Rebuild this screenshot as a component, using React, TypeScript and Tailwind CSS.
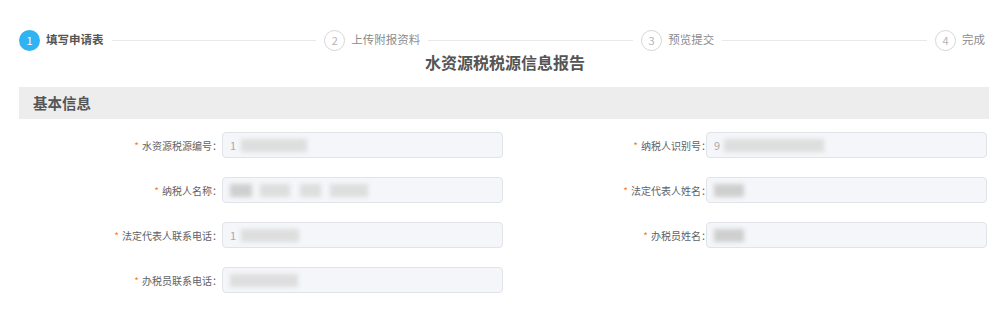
import React from 'react';

const font = { fontFamily: '"Noto Sans CJK SC", "Noto Sans", sans-serif' };

const steps = ['填写申请表', '上传附报资料', '预览提交', '完成'];

interface Blob {
    w: number;
    gap?: number;
    dark?: boolean;
}

interface Field {
    label: string;
    lead?: string;
    blobs: Blob[];
}

const leftFields: Field[] = [
    { label: '水资源税源编号：', lead: '1', blobs: [{ w: 66, gap: 3 }] },
    { label: '纳税人名称：', blobs: [{ w: 22, dark: true }, { w: 30, gap: 8 }, { w: 21, gap: 10 }, { w: 38, gap: 9 }] },
    { label: '法定代表人联系电话：', lead: '1', blobs: [{ w: 58, gap: 3 }] },
    { label: '办税员联系电话：', blobs: [{ w: 68 }] },
];

const rightFields: Field[] = [
    { label: '纳税人识别号：', lead: '9', blobs: [{ w: 100, gap: 2 }] },
    { label: '法定代表人姓名：', blobs: [{ w: 30, dark: true }] },
    { label: '办税员姓名：', blobs: [{ w: 30, dark: true }] },
];

const Redacted: React.FC<{ field: Field }> = ({ field }) => (
    <div className="flex items-center h-full pl-[7px] text-[11px] text-[#aaa]">
        {field.lead && <span className="mr-[2px]">{field.lead}</span>}
        {field.blobs.map((b, i) => (
            <span
                key={i}
                className={`h-[13px] blur-[2px] ${b.dark ? 'bg-[#cfcfcf]' : 'bg-[#dedede]'}`}
                style={{ width: b.w, marginLeft: b.gap ?? 0 }}
            />
        ))}
    </div>
);

const Input: React.FC<{ field: Field }> = ({ field }) => (
    <div className="relative h-[26px] w-[281px] rounded-[4px] border border-[#e0e3e8] bg-[#f4f6f9]">
        <Redacted field={field} />
    </div>
);

const Label: React.FC<{ text: string; className?: string }> = ({ text, className }) => (
    <div className={`text-right text-[10px] text-[#606266] whitespace-nowrap ${className ?? ''}`}>
        <span className="text-[#ff7a1a] mr-[3px]">*</span>
        {text}
    </div>
);

export default function App() {
    return (
        <div className="bg-white w-[1000px] h-[318px] overflow-hidden" style={font}>
            <div className="ml-[19px] w-[970px]">
                {/* Steps: lines share the free space equally */}
                <div className="flex items-center pt-[30px] h-[50px] pr-[4px]">
                    {steps.map((s, i) => {
                        const active = i === 0;
                        const last = i === steps.length - 1;
                        return (
                            <React.Fragment key={s}>
                                <div
                                    className={`flex items-center justify-center w-[21px] h-[21px] rounded-full text-[11px] shrink-0 ${
                                        active ? 'bg-[#2fb3f2] text-white' : 'border border-[#d6d6d6] text-[#b5b5b5]'
                                    }`}
                                >
                                    {i + 1}
                                </div>
                                <span
                                    className={`ml-[6px] text-[11.5px] whitespace-nowrap ${
                                        active ? 'font-bold text-[#555]' : 'text-[#8c8c8c]'
                                    }`}
                                >
                                    {s}
                                </span>
                                {!last && <div className="flex-1 h-px bg-[#e8e8e8] ml-[8px] mr-[8px]" />}
                            </React.Fragment>
                        );
                    })}
                </div>

                {/* Title */}
                <h1 className="text-center text-[16px] leading-[20px] font-bold text-[#555] mt-[2px] pl-[2px]">
                    水资源税税源信息报告
                </h1>

                {/* Section header */}
                <div className="mt-[15px] h-[32px] bg-[#ededed] flex items-center pl-[14px]">
                    <span className="text-[14.5px] font-bold text-[#555]">基本信息</span>
                </div>

                {/* Form */}
                <div className="grid grid-cols-2 mt-[13px] gap-y-[19px]">
                    {[0, 1, 2, 3].map(r => (
                        <React.Fragment key={r}>
                            <div className="flex items-center">
                                <Label text={leftFields[r].label} className="w-[203px]" />
                                <Input field={leftFields[r]} />
                            </div>
                            <div className="flex items-center">
                                {rightFields[r] && (
                                    <>
                                        <Label text={rightFields[r].label} className="w-[207px] -mr-[5px]" />
                                        <Input field={rightFields[r]} />
                                    </>
                                )}
                            </div>
                        </React.Fragment>
                    ))}
                </div>
            </div>
        </div>
    );
}
